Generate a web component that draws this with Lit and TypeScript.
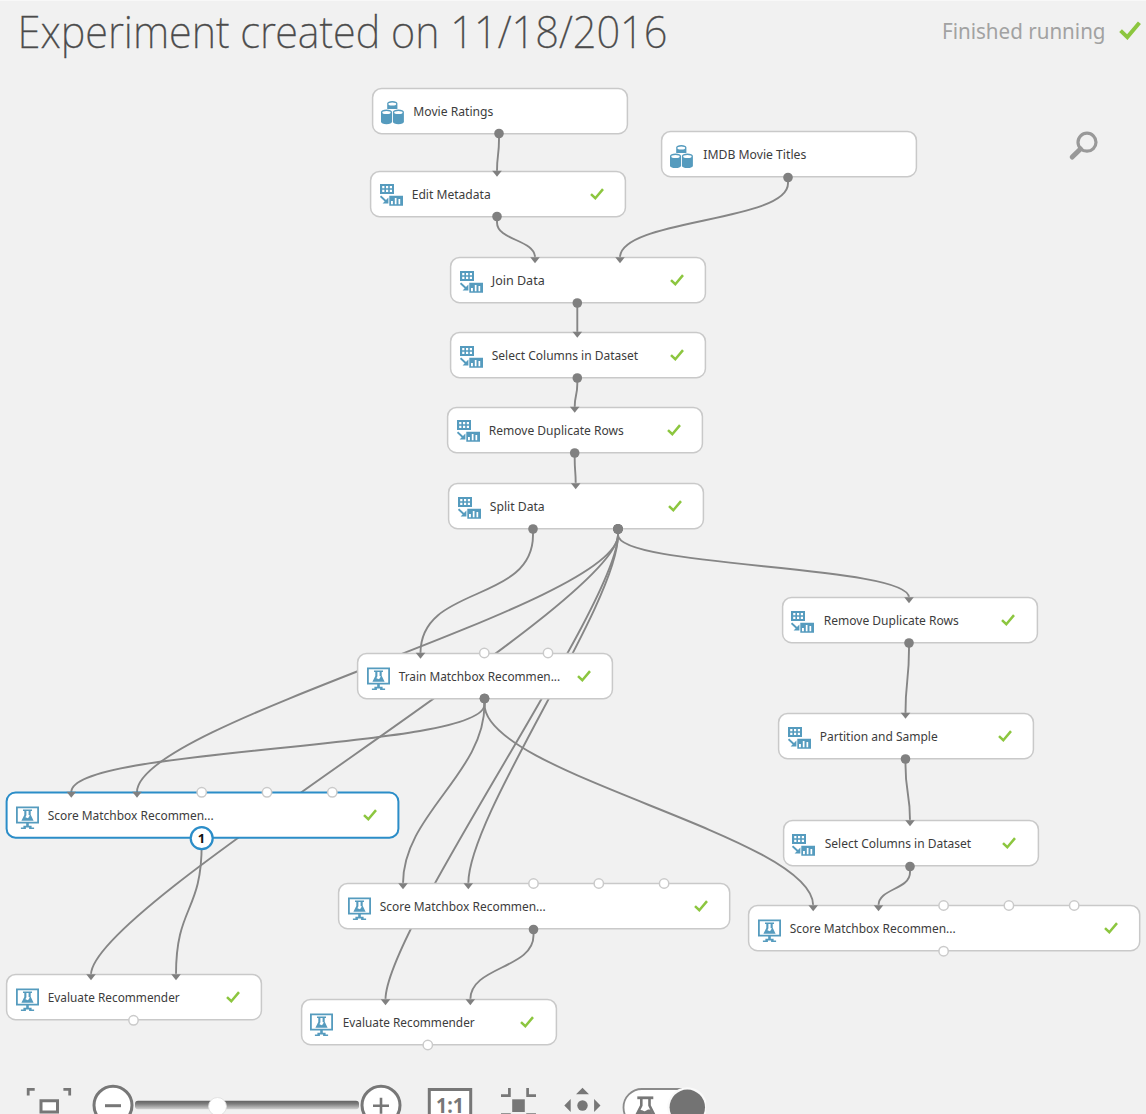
import { LitElement, html, svg, css } from "lit";
import { customElement, property } from "lit/decorators.js";
import { styleMap } from "lit/directives/style-map.js";

type IconKind = "data" | "table" | "flask";

interface GraphNode {
  x: number;
  y: number;
  w: number;
  label: string;
  labelWidth: number;
  icon: IconKind;
  done: boolean;
  selected?: boolean;
}

type Point = [number, number];

const N = (
  x: number, y: number, w: number, label: string, labelWidth: number,
  icon: IconKind, done = true, selected = false,
): GraphNode => ({ x, y, w, label, labelWidth, icon, done, selected });

const NODES: GraphNode[] = [
  N(371.7, 87.8, 256, "Movie Ratings", 79.5, "data", false),
  N(660.8, 131.4, 256, "IMDB Movie Titles", 102.5, "data", false),
  N(370, 170.8, 256, "Edit Metadata", 78.5, "table"),
  N(450, 257.3, 256, "Join Data", 52.5, "table"),
  N(450, 332, 256, "Select Columns in Dataset", 146, "table"),
  N(447.4, 406.8, 256, "Remove Duplicate Rows", 134.5, "table"),
  N(448.4, 483.4, 256, "Split Data", 54.5, "table"),
  N(781.8, 597.4, 256, "Remove Duplicate Rows", 134.5, "table"),
  N(357.3, 653, 256, "Train Matchbox Recommen...", 161, "flask"),
  N(778.3, 713, 256, "Partition and Sample", 117.5, "table"),
  N(782.8, 820.4, 256, "Select Columns in Dataset", 146, "table"),
  N(6.2, 792.2, 393, "Score Matchbox Recommen...", 165.5, "flask", true, true),
  N(338.2, 883.4, 392.3, "Score Matchbox Recommen...", 165.5, "flask"),
  N(748.2, 905.4, 392.3, "Score Matchbox Recommen...", 165.5, "flask"),
  N(6.2, 974.4, 256, "Evaluate Recommender", 131.5, "flask"),
  N(300.8, 999.3, 256, "Evaluate Recommender", 131.5, "flask"),
];

const EDGES: [Point, Point][] = [
  [[499, 133.5], [497, 171]],
  [[788, 177.5], [620, 257.5]],
  [[497, 216.5], [535, 257.5]],
  [[577.3, 303], [577.3, 332]],
  [[577.3, 378], [574.7, 407]],
  [[574.7, 453], [575.7, 483.5]],
  [[533, 529], [420.5, 653]],
  [[618, 529], [909, 597.5]],
  [[618, 529], [137, 792]],
  [[618, 529], [91, 974.5]],
  [[618, 529], [468.3, 883.5]],
  [[618, 529], [385.5, 999.5]],
  [[484.5, 698.5], [71.3, 792]],
  [[484.5, 698.5], [403, 883.5]],
  [[484.5, 698.5], [813.2, 905.5]],
  [[909, 643], [905.5, 713]],
  [[905.5, 759], [910, 820.5]],
  [[910, 866.5], [878.5, 905.5]],
  [[201.7, 838], [176, 974.5]],
  [[533.5, 929.5], [470.3, 999.5]],
];

const OPEN_PORTS: Point[] = [
  [484.3, 653], [548, 653],
  [201.7, 792.3], [267, 792.3], [332.3, 792.3],
  [533.5, 883.5], [598.8, 883.5], [664.1, 883.5],
  [943.6, 905.5], [1008.9, 905.5], [1074.2, 905.5],
  [943.6, 951.2], [133.5, 1020.3], [427.8, 1045],
];

const REACH = 69;
const STUB = 6;

function curve([x1, y0]: Point, [x2, y2]: Point): string {
  const y1 = y0 + STUB;
  const dy = y2 - y1;
  const k = dy > 115 ? REACH : dy * 0.52;
  return `M${x1} ${y0}V${y1}C${x1} ${y1 + k} ${x2} ${y2 - k} ${x2} ${y2}`;
}

const ICONS = {
  data: svg`
    <g fill="#559bbe">
      <path d="M6.200 2.400C6.200 1 8.400 0 11.300 0s5.100 1 5.100 2.400V8H6.200z"/>
      <path d="M0 11C0 9.500 2.400 8.500 5.500 8.500S11 9.500 11 11v9.800C11 22.200 8.600 23.200 5.500 23.200S0 22.200 0 20.800z"/>
      <path d="M11.900 11c0-1.500 2.400-2.500 5.500-2.500s5.500 1 5.500 2.500v9.800c0 1.400-2.400 2.400-5.500 2.400s-5.500-1-5.500-2.400z"/>
    </g>
    <g fill="#fff">
      <ellipse cx="11.300" cy="2.900" rx="3.900" ry="1.500"/>
      <ellipse cx="5.500" cy="11.500" rx="4.200" ry="1.500"/>
      <ellipse cx="17.400" cy="11.500" rx="4.200" ry="1.500"/>
    </g>`,
  table: svg`
    <path fill="#559bbe" d="M0 0h14v10H0z"/>
    <path fill="#fff" d="M2.200 2h2.200v2.200H2.200zM6 2h2.200v2.200H6zM9.800 2H12v2.200H9.800zM2.200 5.800h2.200V8H2.200zM6 5.800h2.200V8H6zM9.800 5.800H12V8H9.800z"/>
    <path fill="none" stroke="#559bbe" stroke-width="1.900" d="M.5 12.200l6 5.600"/>
    <path fill="#559bbe" d="M8.400 13.400v6.100H2.600zM9.300 11.800h13.700v10H9.300z"/>
    <path fill="#fff" d="M11 17h1.900v3.200H11zM14.800 14h1.700v6.200h-1.700zM18.500 15h1.700v5.200h-1.700z"/>`,
  flask: svg`
    <path fill="none" stroke="#559bbe" stroke-width="1.800" d="M.9 1.300h21.200v15.400H.9z"/>
    <path fill="#559bbe" d="M10.200 17h2.600v3.200h-2.600zM7.400 19.800h8.200v1.700H7.400zM4.900 21.500h5v1.600h-5zM13.100 21.500h5v1.600h-5zM7 3.600h9v1.500H7z"/>
    <path fill="#559bbe" d="M8.300 4.500h2.100v4.700l-1 2.100 2.600.9 1.900-2.600-1.300-.6V4.500h2.100v4.300l2.900 5.900H5.400L8.300 9z"/>`,
};

@customElement("status-check")
class StatusCheck extends LitElement {
  static styles = css`
    :host { display: block; }
    svg { display: block; width: 100%; height: 100%; }
  `;
  render() {
    return html`<svg viewBox="0 0 14 12" preserveAspectRatio="none">
      <path d="M1 6.100l4.300 4.100L13 1.100" fill="none" stroke="#8cc63f" stroke-width="2.500"/>
    </svg>`;
  }
}

@customElement("graph-node")
class GraphNodeCard extends LitElement {
  static styles = css`
    :host { display: block; }
    .card {
      display: flex;
      align-items: flex-start;
      position: relative;
      height: 46px;
      box-sizing: border-box;
      padding: 0 22.500px 0 9.500px;
    }
    .frame { position: absolute; inset: 0; width: 100%; height: 100%; overflow: visible; }
    .frame rect { fill: #fff; stroke: #c9c9c9; stroke-width: 1.500px; }
    .frame.selected rect { stroke: #2b8dc8; stroke-width: 2px; }
    .icon { position: relative; width: 23px; height: 23.500px; margin-top: 13.500px; flex: none; }
    .label {
      position: relative;
      flex: 1;
      min-width: 0;
      height: 46px;
      margin-left: 9.300px;
      overflow: visible;
      font: 13px "Noto Sans", "Open Sans", sans-serif;
      fill: #3c3c3c;
    }
    status-check { position: relative; width: 14px; height: 12px; margin-top: 17px; flex: none; }
  `;
  @property({ attribute: false }) node!: GraphNode;
  render() {
    const n = this.node;
    return html`<div class="card">
      <svg class="frame ${n.selected ? "selected" : ""}">
        <rect x="0.600" y="0.500" width=${n.w - 1.2} height="45.200" rx="9"/>
      </svg>
      <svg class="icon" viewBox="0 0 23 23.500">${ICONS[n.icon]}</svg>
      <svg class="label"><text x=${n.icon === "data" ? 0.3 : -0.3} y="28" textLength=${n.labelWidth + 0.5} lengthAdjust="spacingAndGlyphs">${n.label}</text></svg>
      ${n.done ? html`<status-check></status-check>` : null}
    </div>`;
  }
}

@customElement("zoom-toolbar")
class ZoomToolbar extends LitElement {
  static styles = css`
    :host { display: block; height: 34px; overflow: hidden; }
    .bar { display: flex; align-items: flex-start; padding-left: 26px; }
    svg { display: block; flex: none; height: 46px; }
    .fit { width: 46px; margin-right: 20px; }
    .round { width: 42px; }
    .slider { width: 226px; }
    .actual { width: 46px; margin-left: 25px; }
    .shrink { width: 37px; margin-left: 27px; }
    .pan { width: 38px; margin-left: 26px; }
    .toggle { width: 86px; margin-left: 19px; }
    .ratio { font: bold 22px "Noto Sans", sans-serif; fill: #777; }
  `;
  render() {
    return html`<div class="bar">
      <svg class="fit" viewBox="0 0 46 46">
        <path d="M2.200 15.500V9.300H8.700M37.400 9.300h6.300v6.200" fill="none" stroke="#777" stroke-width="2.800"/>
        <path d="M15 20.800h16.500V32H15z" fill="#fff" stroke="#777" stroke-width="3"/>
      </svg>
      <svg class="round" viewBox="0 0 42 46">
        <circle cx="21" cy="25.300" r="19" fill="#fff" stroke="#777" stroke-width="3"/>
        <path d="M13 25.700h16" stroke="#777" stroke-width="3"/>
      </svg>
      <svg class="slider" viewBox="0 0 226 46">
        <defs><linearGradient id="g" x1="0" y1="0" x2="0" y2="1">
          <stop offset="0" stop-color="#636363"/><stop offset="0.350" stop-color="#7c7c7c"/><stop offset="1" stop-color="#d2d2d2"/>
        </linearGradient></defs>
        <rect x="1" y="20.800" width="224" height="8.500" rx="3" fill="url(#g)"/>
        <circle cx="83.500" cy="26.500" r="9" fill="#fff" stroke="#ddd" stroke-width="0.800"/>
      </svg>
      <svg class="round" viewBox="0 0 42 46">
        <circle cx="21" cy="25.300" r="19" fill="#fff" stroke="#777" stroke-width="3"/>
        <path d="M13 25.700h16M21 17.700v16" stroke="#777" stroke-width="2.600"/>
      </svg>
      <svg class="actual" viewBox="0 0 46 46">
        <path d="M2.300 9.600h41.400V44H2.300z" fill="#fff" stroke="#777" stroke-width="3"/>
        <text class="ratio" x="9" y="33" textLength="28" lengthAdjust="spacingAndGlyphs">1:1</text>
      </svg>
      <svg class="shrink" viewBox="0 0 37 46">
        <path d="M1 15.700h8.400V8M36 15.700h-8.400V8M1 34.700h8.400V42M36 34.700h-8.400V42" fill="none" stroke="#777" stroke-width="2.700"/>
        <path d="M12.200 19.300h12.600V32H12.200z" fill="#777"/>
      </svg>
      <svg class="pan" viewBox="0 0 38 46">
        <g fill="#777"><circle cx="19.500" cy="25.500" r="5.200"/>
        <path d="M19.500 7.800l6.500 6.400H13zM1.300 25.500L7.700 19v13zM37.500 25.500L31.100 19v13zM19.500 43l6.500-6.400H13z"/></g>
      </svg>
      <svg class="toggle" viewBox="0 0 86 46">
        <rect x="3.500" y="9" width="80" height="37" rx="18.400" fill="#fff" stroke="#8a8a8a" stroke-width="1.800"/>
        <circle cx="67.300" cy="27.300" r="20" fill="#fafafa"/>
        <circle cx="67.300" cy="27.300" r="17.700" fill="#737373"/>
        <path d="M17.300 17.800h16" stroke="#777" stroke-width="2.800"/>
        <path d="M21.300 19v6.500L15.500 37M29.500 19v6.500L35.300 37" fill="none" stroke="#777" stroke-width="2.600"/>
        <path d="M19.300 30.500c3-1.500 4 1.500 6 .5s3-2 5.500-1L34 37H16z" fill="#777"/>
      </svg>
    </div>`;
  }
}

@customElement("app-root")
class AppRoot extends LitElement {
  static styles = css`
    :host {
      display: flex;
      flex-direction: column;
      width: 1146px;
      height: 1114px;
      box-sizing: border-box;
      overflow: hidden;
      background: #f1f1f1;
      border-top: 1px solid #f8f8f8;
      font-family: "Noto Sans", "Open Sans", sans-serif;
    }
    header { display: flex; height: 63px; justify-content: space-between; padding: 0 5px 0 15px; }
    .title { width: 700px; height: 63px; font: 200 43.500px "Noto Sans", "Open Sans", sans-serif; fill: #4b4b4b; stroke: #4b4b4b; stroke-width: 0.300px; }
    .status { display: flex; }
    .state { width: 178px; height: 63px; font: 22px "Noto Sans", "Open Sans", sans-serif; fill: #a2a2a2; }
    .status status-check { width: 22px; height: 19px; margin-top: 20px; }
    main { position: relative; flex: 1; }
    .world { position: absolute; left: 0; top: -64px; width: 1146px; height: 1080px; }
    .layer { position: absolute; inset: 0; width: 1146px; height: 1080px; pointer-events: none; }
    .edge { fill: none; stroke: #868686; stroke-width: 1.900px; }
    .dot { fill: #808080; }
    .open { fill: #fff; stroke: #cacaca; stroke-width: 1.500px; }
    .badge { fill: #fff; stroke: #2b8dc8; stroke-width: 2.200px; }
    .badge-text { font: bold 13px "Noto Sans", sans-serif; fill: #111; text-anchor: middle; }
    .place { position: absolute; }
  `;
  render() {
    return html`
      <header>
        <svg class="title"><text x="2.500" y="47" textLength="650" lengthAdjust="spacingAndGlyphs">Experiment created on 11/18/2016</text></svg>
        <div class="status">
          <svg class="state"><text x="1" y="38.200" textLength="163.500" lengthAdjust="spacingAndGlyphs">Finished running</text></svg>
          <status-check></status-check>
        </div>
      </header>
      <main>
        <div class="world">
          <svg class="layer">${EDGES.map(([a, b]) => svg`<path class="edge" d=${curve(a, b)}/>`)}</svg>
          ${NODES.map((n) => html`<graph-node class="place" .node=${n}
            style=${styleMap({ left: `${n.x}px`, top: `${n.y}px`, width: `${n.w}px` })}></graph-node>`)}
          <svg class="layer">
            ${EDGES.map(([, [x, y]]) => svg`<path class="dot" d="M${x - 4.8} ${y - 0.3}h9.600l-4.800 6z"/>`)}
            ${EDGES.map(([[x, y]]) => svg`<circle class="dot" cx=${x} cy=${y} r="4.800"/>`)}
            ${OPEN_PORTS.map(([x, y]) => svg`<circle class="open" cx=${x} cy=${y} r="4.700"/>`)}
            <circle class="badge" cx="201.700" cy="838.200" r="11"/>
            <text class="badge-text" x="201.500" y="843">1</text>
            <g fill="none" stroke="#999">
              <circle cx="1087" cy="142.200" r="9" stroke-width="3.200"/>
              <path d="M1080.500 149l-8.300 8" stroke-width="5" stroke-linecap="round"/>
            </g>
          </svg>
        </div>
      </main>
      <zoom-toolbar></zoom-toolbar>
    `;
  }
}
